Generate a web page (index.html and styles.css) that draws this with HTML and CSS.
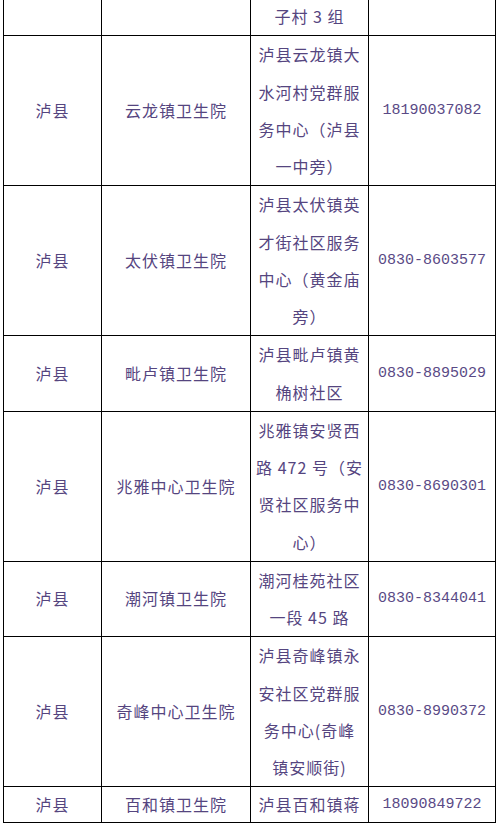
FILE: index.html
```html
<!DOCTYPE html>
<html lang="zh-CN">
<head>
<meta charset="utf-8">
<title>泸县卫生院</title>
<link rel="stylesheet" href="styles.css">
</head>
<body>
<table class="grid">
  <colgroup>
    <col class="c-county">
    <col class="c-name">
    <col class="c-addr">
    <col class="c-phone">
  </colgroup>
  <tbody>
    <tr>
      <td></td>
      <td></td>
      <td>子村 3 组</td>
      <td class="phone"></td>
    </tr>
    <tr>
      <td>泸县</td>
      <td>云龙镇卫生院</td>
      <td>泸县云龙镇大<br>水河村党群服<br>务中心（泸县<br>一中旁）</td>
      <td class="phone">18190037082</td>
    </tr>
    <tr>
      <td>泸县</td>
      <td>太伏镇卫生院</td>
      <td>泸县太伏镇英<br>才街社区服务<br>中心（黄金庙<br>旁）</td>
      <td class="phone">0830-8603577</td>
    </tr>
    <tr>
      <td>泸县</td>
      <td>毗卢镇卫生院</td>
      <td>泸县毗卢镇黄<br>桷树社区</td>
      <td class="phone">0830-8895029</td>
    </tr>
    <tr>
      <td>泸县</td>
      <td>兆雅中心卫生院</td>
      <td>兆雅镇安贤西<br>路 472 号（安<br>贤社区服务中<br>心）</td>
      <td class="phone">0830-8690301</td>
    </tr>
    <tr>
      <td>泸县</td>
      <td>潮河镇卫生院</td>
      <td>潮河桂苑社区<br>一段 45 路</td>
      <td class="phone">0830-8344041</td>
    </tr>
    <tr>
      <td>泸县</td>
      <td>奇峰中心卫生院</td>
      <td>泸县奇峰镇永<br>安社区党群服<br>务中心(奇峰<br>镇安顺街)</td>
      <td class="phone">0830-8990372</td>
    </tr>
    <tr class="last">
      <td>泸县</td>
      <td>百和镇卫生院</td>
      <td>泸县百和镇蒋</td>
      <td class="phone">18090849722</td>
    </tr>
  </tbody>
</table>
</body>
</html>
```

FILE: styles.css
```css
html, body {
  margin: 0;
  padding: 0;
  background: #ffffff;
  overflow: hidden;
}

.grid {
  margin: -3px 0 0 3px;
  width: 492px;
  table-layout: fixed;
  border-collapse: collapse;
  font-family: "Noto Sans CJK SC", "Noto Sans", sans-serif;
  font-size: 16px;
  letter-spacing: 1px;
  color: #55457f;
}

.c-county { width: 98px; }
.c-name { width: 149px; }
.c-addr { width: 118px; }
.c-phone { width: 127px; }

.grid td {
  border: 1px solid #000000;
  padding: 0 2px;
  text-align: center;
  vertical-align: middle;
  line-height: 37.25px;
  white-space: nowrap;
}

.grid .last td {
  line-height: 35px;
}

.grid td.phone {
  font-family: "Liberation Mono", "DejaVu Sans Mono", monospace;
  font-size: 15px;
  letter-spacing: 0;
  color: #5a4a86;
}
```
